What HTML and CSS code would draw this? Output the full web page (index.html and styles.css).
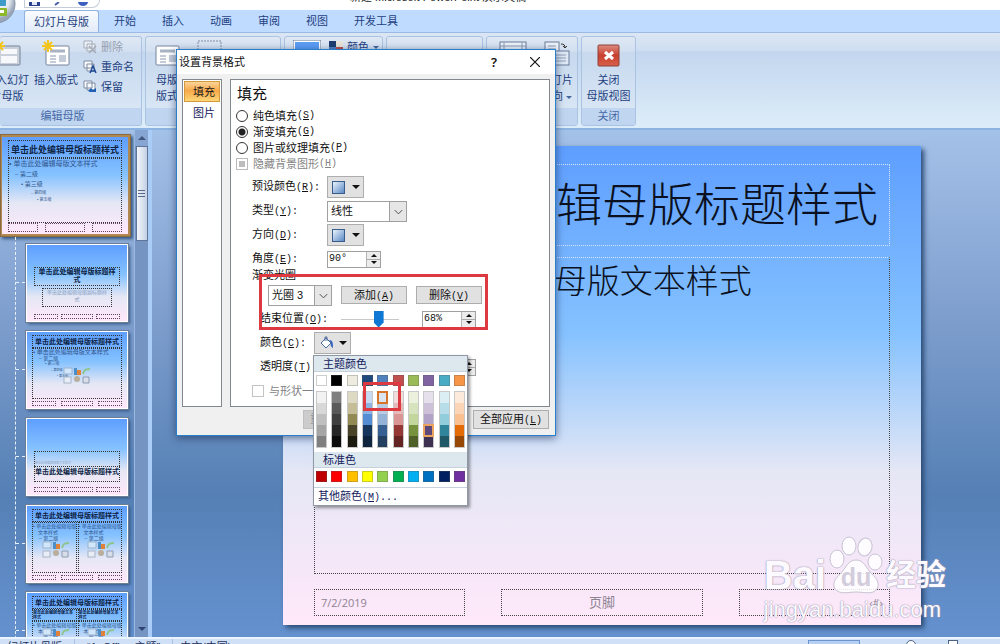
FILE: index.html
```
<!DOCTYPE html>
<html lang="zh-CN">
<head>
    <meta charset="UTF-8">
    <title>幻灯片母版</title>
    <link rel="stylesheet" href="styles.css">
</head>
<body>
    <header class="titlebar">
        <div class="quick">
            <svg width="66" height="10" viewBox="0 0 66 10">
                <path d="M1 0v4h11V0" fill="#2b3f8f"/>
                <path d="M4 0h5v3H4z" fill="#dfe6f8"/>
                <path d="M31 0l-4 3" stroke="#4a5fae" stroke-width="2"/>
                <path d="M50 0a5 4 0 0 0 10 0z" fill="#3f5fc0"/>
            </svg>
        </div>
        <span class="doc-name">新建 Microsoft PowerPoint 演示文稿</span>
    </header>
    <div class="orb">
        <svg width="42" height="42" viewBox="0 0 42 42">
            <defs>
                <radialGradient id="orbFill" cx="50%" cy="40%">
                    <stop offset="0" stop-color="#fff"/>
                    <stop offset=".7" stop-color="#e3e8ef"/>
                    <stop offset="1" stop-color="#9aa6b8"/>
                </radialGradient>
            </defs>
            <circle cx="21" cy="21" r="19" fill="url(#orbFill)" stroke="#8794a8"/>
            <rect x="23" y="16" width="8" height="7" rx="1" fill="#3f9bc8"/>
            <rect x="23" y="25" width="9" height="8" rx="1" fill="#8db828"/>
            <path d="M25 27h4v3h-4z" fill="#fff"/>
            <rect x="13" y="25" width="8" height="8" rx="1" fill="#e8b321"/>
        </svg>
    </div>
    <nav class="tabs">
        <a class="tab active" href="#">幻灯片母版</a>
        <a class="tab" href="#">开始</a>
        <a class="tab" href="#">插入</a>
        <a class="tab" href="#">动画</a>
        <a class="tab" href="#">审阅</a>
        <a class="tab" href="#">视图</a>
        <a class="tab" href="#">开发工具</a>
    </nav>

    <section class="ribbon">
        <div class="group g-edit">
            <div class="tools">
                <button class="big" type="button">
                    <svg width="28" height="28" viewBox="0 0 28 28">
                        <rect x="5" y="6" width="22" height="19" rx="1" fill="#c9d0da" stroke="#77839a"/>
                        <rect x="8" y="9" width="16" height="5" fill="#f6f8fb"/><rect x="8" y="16" width="16" height="7" fill="#f6f8fb"/>
                        <path d="M6 0v13M0 6h12M2 2l8 8M10 2l-8 8" stroke="#f3c51c" stroke-width="2"/>
                    </svg>
                    <span>插入幻灯<br>片母版</span>
                </button>
                <button class="big" type="button">
                    <svg width="28" height="28" viewBox="0 0 28 28">
                        <rect x="4" y="6" width="23" height="19" rx="1" fill="#fff" stroke="#77839a"/>
                        <path d="M8 11h15" stroke="#a9b3c4" stroke-width="3"/>
                        <path d="M8 16h6M8 19h6M8 22h6" stroke="#8c98ae"/>
                        <rect x="17" y="15" width="7" height="7" fill="#c3cbd8"/>
                        <path d="M6 0v12M0 6h12M2 2l8 8M10 2l-8 8" stroke="#f3c51c" stroke-width="2"/>
                    </svg>
                    <span>插入版式</span>
                </button>
                <div class="stack">
                    <button class="small" type="button" disabled>
                        <svg width="14" height="14" viewBox="0 0 14 14"><path d="M1 1h8v7H1zM4 4h8v7H4z" fill="#eef1f6" stroke="#a3abb8"/><path d="M6 6l7 7M13 6l-7 7" stroke="#a3abb8" stroke-width="1.5"/></svg>
                        删除
                    </button>
                    <button class="small" type="button">
                        <svg width="14" height="14" viewBox="0 0 14 14"><path d="M1 1h8v7H1zM4 4h7v7H4z" fill="#f8fafd" stroke="#7f8ca3"/><path d="M7 13l3-7 3 7M8 11h4" fill="none" stroke="#1f4a94" stroke-width="1.5"/></svg>
                        重命名
                    </button>
                    <button class="small" type="button">
                        <svg width="14" height="14" viewBox="0 0 14 14"><path d="M1 1h8v7H1zM4 3h8v7H4z" fill="#f8fafd" stroke="#7f8ca3"/><path d="M5 11l3-3 2 2 3-2v4H7z" fill="#1f5fb4"/></svg>
                        保留
                    </button>
                </div>
            </div>
            <div class="group-name">编辑母版</div>
        </div>
        <div class="group g-layout">
            <div class="tools">
                <button class="big" type="button">
                    <svg width="28" height="28" viewBox="0 0 28 28">
                        <rect x="3" y="6" width="23" height="19" rx="1" fill="#fff" stroke="#77839a"/>
                        <path d="M7 11h15" stroke="#a9b3c4" stroke-width="3"/>
                        <path d="M7 16h6M7 19h6M7 22h6" stroke="#8c98ae"/>
                        <rect x="16" y="15" width="7" height="7" fill="#c3cbd8"/>
                    </svg>
                    <span>母版<br>版式</span>
                </button>
                <button class="big" type="button">
                    <svg width="28" height="28" viewBox="0 0 28 28"><rect x="2" y="1" width="23" height="22" fill="none" stroke="#7f8ca3" stroke-dasharray="2 1"/></svg>
                    <span>插入<br>占位符</span>
                </button>
            </div>
            <div class="group-name">母版版式</div>
        </div>
        <div class="group g-theme">
            <div class="tools">
                <button class="big" type="button">
                    <svg width="28" height="28" viewBox="0 0 28 28"><rect x="0" y="0" width="28" height="24" fill="#fff" stroke="#5c6f8d"/><rect x="2" y="2" width="24" height="20" fill="#5b9df5"/></svg>
                    <span>主题</span>
                </button>
                <div class="stack">
                    <button class="small" type="button">
                        <svg width="14" height="12" viewBox="0 0 14 12"><path d="M0 0h7v6H0z" fill="#1f3d70"/><path d="M7 0h7v6H7z" fill="#e8e4d8"/><path d="M0 6h7v6H0z" fill="#4f81bd"/><path d="M7 6h7v6H7z" fill="#c0504d"/></svg>
                        颜色 <i class="tri"></i>
                    </button>
                </div>
            </div>
            <div class="group-name">编辑主题</div>
        </div>
        <div class="group g-back"><div class="tools"></div><div class="group-name">背景</div></div>
        <div class="group g-page">
            <div class="tools">
                <button class="big" type="button">
                    <svg width="28" height="28" viewBox="0 0 28 28"><rect x="1" y="2" width="26" height="22" fill="#eef3fa" stroke="#6b7d99"/><path d="M5 2v22M23 2v22M1 6h26" stroke="#8d9db6"/></svg>
                    <span>页面设置</span>
                </button>
                <button class="big" type="button">
                    <svg width="28" height="28" viewBox="0 0 28 28"><rect x="2" y="2" width="14" height="18" fill="#eef3fa" stroke="#6b7d99"/><rect x="11" y="11" width="15" height="14" fill="#dfe9f6" stroke="#6b7d99"/><path d="M5 6h8M5 9h8M13 15h10M13 18h10M13 21h10" stroke="#8d9db6"/><path d="M18 4c3 0 4 1 4 4l-2-2m2 2l2-2" fill="none" stroke="#333"/></svg>
                    <span>幻灯片<br>方向 <i class="tri"></i></span>
                </button>
            </div>
            <div class="group-name">页面设置</div>
        </div>
        <div class="group g-close">
            <div class="tools">
                <button class="big" type="button">
                    <svg width="28" height="28" viewBox="0 0 28 28">
                        <defs><linearGradient id="redFill" x1="0" y1="0" x2="0" y2="1"><stop offset="0" stop-color="#dd8b80"/><stop offset=".5" stop-color="#c8402f"/><stop offset="1" stop-color="#d8604a"/></linearGradient></defs>
                        <rect x="3" y="5" width="21" height="21" rx="1" fill="url(#redFill)" stroke="#8e4038"/>
                        <path d="M10 12l8 7M18 12l-8 7" stroke="#fff" stroke-width="3"/>
                    </svg>
                    <span>关闭<br>母版视图</span>
                </button>
            </div>
            <div class="group-name">关闭</div>
        </div>
    </section>

    <main class="workspace">
        <aside class="thumbs">
            <div class="thumb-list">
                <div class="thumb master">
                    <div class="t-title">单击此处编辑母版标题样式</div>
                    <div class="t-body">
                        <p>• 单击此处编辑母版文本样式</p>
                        <p class="l2">– 第二级</p>
                        <p class="l3">• 第三级</p>
                        <p class="l4">– 第四级</p>
                        <p class="l5">• 第五级</p>
                    </div>
                    <div class="t-foot"><i></i><i></i><i></i></div>
                </div>
                <ul class="tree">
                    <li>
                        <div class="thumb cover">
                            <div class="t-title">单击此处编辑母版标题样<br>式</div>
                            <div class="t-sub">单击此处编辑母版副标题样<br>式</div>
                            <div class="t-foot"><i></i><i></i><i></i></div>
                        </div>
                    </li>
                    <li>
                        <div class="thumb">
                            <div class="t-title">单击此处编辑母版标题样式</div>
                            <div class="t-body">
                                <p>• 单击此处编辑母版文本样式</p>
                                <p class="l2">– 第二级</p>
                                <p class="l3">• 第三级</p>
                                <p class="l4">– 第四级</p>
                                <p class="l5">• 第五级</p>
                                <svg class="media" width="28" height="17" viewBox="0 0 28 17"><use href="#media"/></svg>
                            </div>
                            <div class="t-foot"><i></i><i></i><i></i></div>
                        </div>
                    </li>
                    <li>
                        <div class="thumb section">
                            <div class="t-sub">单击此处编辑母版文本样式</div>
                            <div class="t-title">单击此处编辑母版标题样式</div>
                            <div class="t-foot"><i></i><i></i><i></i></div>
                        </div>
                    </li>
                    <li>
                        <div class="thumb">
                            <div class="t-title">单击此处编辑母版标题样式</div>
                            <div class="t-cols">
                                <div class="t-body"><p>• 单击此处编辑母版</p><p class="l1">文本样式</p><p class="l2">– 第二级</p><svg class="media" width="28" height="17" viewBox="0 0 28 17"><use href="#media"/></svg></div>
                                <div class="t-body"><p>• 单击此处编辑母版</p><p class="l1">文本样式</p><p class="l2">– 第二级</p><svg class="media" width="28" height="17" viewBox="0 0 28 17"><use href="#media"/></svg></div>
                            </div>
                            <div class="t-foot"><i></i><i></i><i></i></div>
                        </div>
                    </li>
                    <li>
                        <div class="thumb compare">
                            <div class="t-title">单击此处编辑母版标题样式</div>
                            <div class="t-cols heads"><b>单击此处编辑母版文本<br>样式</b><b>单击此处编辑母版文本<br>样式</b></div>
                            <div class="t-cols">
                                <div class="t-body"><p>• 单击此处编辑母版文</p><p class="l1">本样式</p><p class="l2">– 第二级</p><svg class="media" width="28" height="17" viewBox="0 0 28 17"><use href="#media"/></svg></div>
                                <div class="t-body"><p>• 单击此处编辑母版文</p><p class="l1">本样式</p><p class="l2">– 第二级</p><svg class="media" width="28" height="17" viewBox="0 0 28 17"><use href="#media"/></svg></div>
                            </div>
                            <div class="t-foot"><i></i><i></i><i></i></div>
                        </div>
                    </li>
                </ul>
            </div>
            <div class="scroll">
                <span class="arrow up"></span>
                <span class="knob"><i></i><i></i><i></i></span>
                <span class="arrow down"></span>
            </div>
        </aside>
        <section class="stage">
            <article class="slide">
                <h1 class="box s-title">单击此处编辑母版标题样式</h1>
                <div class="box s-body">• 单击此处编辑母版文本样式</div>
                <div class="s-foot">
                    <span class="box date">7/2/2019</span>
                    <span class="box foot">页脚</span>
                    <span class="box num">‹#›</span>
                </div>
            </article>
        </section>
    </main>

    <footer class="status">
        <span class="cell">幻灯片母版</span>
        <span class="cell theme">“1_Office 主题”</span>
        <span class="cell lang">中文(中国)</span>
        <span class="views"></span>
        <span class="cell zoom"><i class="dot"></i><i class="fit"></i></span>
    </footer>

    <div class="dialog" role="dialog" aria-labelledby="dlgTitle">
        <div class="dlg-head">
            <span id="dlgTitle">设置背景格式</span>
            <button class="help" type="button">?</button>
            <button class="close" type="button" aria-label="关闭"><svg width="10" height="10" viewBox="0 0 10 10"><path d="M0 0l10 10M10 0L0 10" stroke="#111" stroke-width="1.2"/></svg></button>
        </div>
        <div class="dlg-body">
            <div class="pages">
                <button class="page on" type="button">填充</button>
                <button class="page" type="button">图片</button>
            </div>
            <form class="panel">
                <h2>填充</h2>
                <label class="opt"><input type="radio" name="fill">纯色填充<span class="key">(<u>S</u>)</span></label>
                <label class="opt"><input type="radio" name="fill" checked>渐变填充<span class="key">(<u>G</u>)</span></label>
                <label class="opt"><input type="radio" name="fill">图片或纹理填充<span class="key">(<u>P</u>)</span></label>
                <label class="opt off"><input class="mixed" type="checkbox" disabled>隐藏背景图形<span class="key">(<u>H</u>)</span></label>
                <div class="row">
                    <label for="preset">预设颜色<span class="key">(<u>R</u>):</span></label>
                    <button class="pick" id="preset" type="button"><span class="grad"></span><i class="tri"></i></button>
                </div>
                <div class="row">
                    <label for="kind">类型<span class="key">(<u>Y</u>):</span></label>
                    <span class="combo"><select id="kind"><option>线性</option></select><svg width="17" height="19" viewBox="0 0 17 19"><path d="M5 8l4 4 4-4" fill="none" stroke="#444"/></svg></span>
                </div>
                <div class="row">
                    <label for="dir">方向<span class="key">(<u>D</u>):</span></label>
                    <button class="pick" id="dir" type="button"><span class="grad"></span><i class="tri"></i></button>
                </div>
                <div class="row">
                    <label for="angle">角度<span class="key">(<u>E</u>):</span></label>
                    <span class="spin"><input id="angle" type="text" value="90°"><span class="ud"><i class="u"></i><i class="d"></i></span></span>
                </div>
                <div class="stops-name">渐变光圈</div>
                <div class="row stops">
                    <span class="combo tool"><select aria-label="渐变光圈"><option>光圈 3</option></select><svg width="17" height="19" viewBox="0 0 17 19"><path d="M5 8l4 4 4-4" fill="none" stroke="#444"/></svg></span>
                    <button class="btn" type="button">添加<span class="key">(<u>A</u>)</span></button>
                    <button class="btn" type="button">删除<span class="key">(<u>V</u>)</span></button>
                </div>
                <div class="row sub">
                    <label for="pos">结束位置<span class="key">(<u>O</u>):</span></label>
                    <input class="slider" type="range" value="68" aria-label="结束位置">
                    <span class="spin"><input id="pos" type="text" value="68%"><span class="ud"><i class="u"></i><i class="d"></i></span></span>
                </div>
                <div class="row sub color">
                    <label for="color">颜色<span class="key">(<u>C</u>):</span></label>
                    <button class="pick" id="color" type="button">
                        <svg width="16" height="14" viewBox="0 0 16 14"><path d="M2 7l5-5 5 5-5 5z" fill="#fff" stroke="#4c6a9a"/><path d="M6 5V1h2v4" fill="none" stroke="#4c6a9a"/><path d="M10 4c4 0 4 3 4 8-2-1-3-3-2-5z" fill="#3565c0"/></svg>
                        <i class="tri"></i>
                    </button>
                </div>
                <div class="row sub">
                    <label for="alpha">透明度<span class="key">(<u>T</u>):</span></label>
                    <input class="slider" type="range" value="0" aria-label="透明度">
                    <span class="spin"><input id="alpha" type="text" value="0%"><span class="ud"><i class="u"></i><i class="d"></i></span></span>
                </div>
                <label class="row check off"><input type="checkbox" disabled>与形状一起旋转<span class="key">(<u>W</u>)</span></label>
            </form>
        </div>
        <div class="dlg-foot">
            <button class="btn" type="button" disabled>重置背景<span class="key">(<u>B</u>)</span></button>
            <button class="btn" type="button">关闭</button>
            <button class="btn" type="button">全部应用<span class="key">(<u>L</u>)</span></button>
        </div>
        <div class="mark mark-stops"></div>

        <div class="palette">
            <div class="pal-name">主题颜色</div>
            <div class="base" id="base"></div>
            <div class="tints" id="tints"></div>
            <div class="pal-name">标准色</div>
            <div class="base" id="standard"></div>
            <button class="more" type="button">其他颜色<span class="key">(<u>M</u>)...</span></button>
            <div class="mark mark-color"></div>
        </div>
    </div>

    <div class="watermark">
        <div class="wm-top">
            <span>Bai</span>
            <span class="paw">
                <svg width="54" height="58" viewBox="0 0 54 58">
                    <ellipse cx="8" cy="23" rx="7" ry="9"/>
                    <ellipse cx="20" cy="10" rx="7" ry="9"/>
                    <ellipse cx="36" cy="11" rx="7" ry="9" transform="rotate(12 36 11)"/>
                    <ellipse cx="46" cy="26" rx="7" ry="8"/>
                    <path d="M27 24c8 0 10 8 15 13 6 6 9 10 6 16-4 6-13 3-21 3s-16 3-21-3c-3-6 0-10 6-16 5-5 7-13 15-13z"/>
                </svg>
                <span class="du">du</span>
            </span>
            <span class="cn">经验</span>
        </div>
        <div class="wm-url">jingyan.baidu.com</div>
    </div>

    <svg class="defs" width="0" height="0">
        <symbol id="media" viewBox="0 0 28 17">
            <rect x="1" y="1" width="8" height="6" fill="#cfe6fb" stroke="#9db4cc"/>
            <path d="M11 1h3v7h-3z" fill="#4d8ec8"/><path d="M14 3h4v5h-4z" fill="#e0813a"/>
            <path d="M20 7c1-5 4-5 7-5" stroke="#8fc48c" stroke-width="2" fill="none"/>
            <rect x="1" y="10" width="7" height="6" fill="#e9eef6" stroke="#a8b4c6"/>
            <circle cx="14" cy="12" r="3" fill="#b9ae9c"/><path d="M20 10h6v6h-6z" fill="#d8dde8" stroke="#8d9bb3"/>
        </symbol>
    </svg>

    <script>
        // 每一列：主色 + 五个深浅
        var theme = [
            ["#ffffff", "#f2f2f2", "#d8d8d8", "#bfbfbf", "#a5a5a5", "#7f7f7f"],
            ["#000000", "#7f7f7f", "#595959", "#3f3f3f", "#262626", "#0c0c0c"],
            ["#eeece1", "#ddd9c3", "#c4bd97", "#938953", "#494429", "#1d1b10"],
            ["#1f497d", "#c6d9f0", "#8db3e2", "#548dd4", "#17365d", "#0f243e"],
            ["#4f81bd", "#dbe5f1", "#b8cce4", "#95b3d7", "#366092", "#244061"],
            ["#c0504d", "#f2dcdb", "#e5b9b7", "#d99694", "#953734", "#632423"],
            ["#9bbb59", "#ebf1dd", "#d7e3bc", "#c3d69b", "#76923c", "#4f6128"],
            ["#8064a2", "#e5e0ec", "#ccc1d9", "#b2a2c7", "#5f497a", "#3f3151"],
            ["#4bacc6", "#dbeef3", "#b7dde8", "#92cddc", "#31859b", "#205867"],
            ["#f79646", "#fdeada", "#fbd5b5", "#fac08f", "#e36c09", "#974806"]
        ];
        var standard = ["#c00000", "#ff0000", "#ffc000", "#ffff00", "#92d050",
            "#00b050", "#00b0f0", "#0070c0", "#002060", "#7030a0"];

        function swatch(box, color) {
            var b = document.createElement("button");
            b.type = "button";
            b.className = "sw";
            b.title = color;
            b.style.background = color;
            box.appendChild(b);
            return b;
        }
        theme.forEach(function (col, i) {
            swatch(document.getElementById("base"), col[0]);
            var div = document.createElement("div");
            div.className = "tint";
            for (var k = 1; k < col.length; k++) {
                var b = swatch(div, col[k]);
                // 悬停的颜色和当前颜色
                if (i == 4 && k == 1) b.className += " hover";
                if (i == 7 && k == 4) b.className += " current";
            }
            document.getElementById("tints").appendChild(div);
        });
        standard.forEach(function (c) {
            swatch(document.getElementById("standard"), c);
        });
    </script>
</body>
</html>
```
FILE: styles.css
```
* {
    box-sizing: border-box;
}
body {
    margin: 0;
    height: 100vh;
    overflow: hidden;
    display: flex;
    flex-direction: column;
    position: relative;
    background: #fff;
    font: 11px/16px "Liberation Sans", "Noto Sans CJK SC", sans-serif;
    color: #1e3f7f;
}
button, input, select {
    font: inherit;
    color: inherit;
    margin: 0;
    padding: 0;
}
button {
    border: 0;
    background: none;
    white-space: nowrap;
}
p, h1, h2, ul {
    margin: 0;
    padding: 0;
    font-weight: normal;
    list-style: none;
}
.tri {
    display: inline-block;
    border: 4px solid transparent;
    border-top-color: #111;
    border-bottom: 0;
}

/* 标题栏 */
.titlebar {
    flex: none;
    height: 10px;
    display: flex;
    overflow: hidden;
    color: #222;
}
.quick {
    width: 76px;
    height: 8px;
    margin-left: 24px;
    padding-left: 3px;
    border: 1px solid #c5ccd8;
    border-top: 0;
    border-radius: 0 0 10px 0;
}
.doc-name {
    margin: -11px 0 0 250px;
}
.orb {
    position: absolute;
    left: -25px;
    top: -17px;
    z-index: 2;
}
.tabs {
    flex: none;
    height: 23px;
    display: flex;
    align-items: flex-end;
    padding-left: 24px;
    gap: 4px;
    background: #bfdbff;
    border-bottom: 1px solid #9dbbe2;
}
.tab {
    height: 22px;
    padding: 0 11px;
    line-height: 22px;
    color: #1e3f7f;
    text-decoration: none;
}
.tab.active {
    padding: 0 9px;
    background: linear-gradient(#fafcfe, #e1ebf8);
    border: 1px solid #8fb2e0;
    border-bottom: 0;
    border-radius: 3px 3px 0 0;
}

/* 功能区 */
.ribbon {
    flex: none;
    height: 97px;
    display: flex;
    gap: 3px;
    padding: 3px 0 2px;
    background: linear-gradient(#dbe6f4, #cfdff1 18%, #c3d6ee 20%, #dcecf8 96%);
    border-bottom: 2px solid #8db4e3;
}
.group {
    flex: none;
    display: flex;
    flex-direction: column;
    overflow: hidden;
    border: 1px solid #aac3e2;
    border-radius: 3px;
    background: linear-gradient(#dfe8f4, #d3e0f1 16%, #c8d9ee 18%, #dce9f7);
}
.g-edit { width: 142px; border-left: 0; }
.g-edit .tools { justify-content: flex-end; padding-right: 7px; }
.g-edit .group-name { padding-right: 16px; }
.g-layout { width: 136px; }
.g-theme { width: 99px; }
.g-back { width: 97px; }
.g-page { width: 92px; }
.g-close { width: 55px; }
.tools {
    flex: 1;
    display: flex;
    justify-content: center;
    align-items: flex-start;
    gap: 5px;
    padding-top: 3px;
}
.g-layout .tools {
    justify-content: flex-start;
    gap: 12px;
    padding-left: 7px;
}
.g-theme .tools {
    justify-content: flex-start;
    padding-left: 8px;
    gap: 8px;
}
.g-page .tools {
    justify-content: flex-end;
    padding-right: 4px;
}
.group-name {
    height: 17px;
    text-align: center;
    line-height: 17px;
    color: #4769a8;
    background: #c0d6f0;
}
.big {
    display: flex;
    flex-direction: column;
    align-items: center;
    gap: 4px;
}
.big svg {
    display: block;
}
.big .tri, .small .tri {
    border-width: 3px;
    border-bottom: 0;
    border-top-color: #47649a;
    vertical-align: middle;
}
.stack {
    display: flex;
    flex-direction: column;
    margin-top: -3px;
}
.small {
    height: 20px;
    display: flex;
    align-items: center;
    gap: 4px;
}
.small:disabled {
    color: #95a0b1;
}

/* 工作区 */
.workspace {
    flex: 1;
    min-height: 0;
    display: flex;
    background: linear-gradient(#a4c1e8, #7f9fce 36%, #5580b5 72%, #6591cf);
}
.thumbs {
    flex: none;
    display: flex;
    border-right: 4px solid #a9cdf6;
}
.thumb-list {
    width: 134px;
    overflow: hidden;
    padding-top: 4px;
}
.thumb {
    width: 102px;
    height: 78px;
    display: flex;
    flex-direction: column;
    padding: 3px 5px 2px;
    border: 1px solid #fff;
    outline: 1px solid #6d7e96;
    box-shadow: 2px 2px 3px #33557f;
    background: linear-gradient(#5e9eff, #85c2ff 39%, #e5e7f5 68%, #ffe8fa);
    color: #0c2344;
    font-size: 7px;
    line-height: 8px;
    white-space: nowrap;
    overflow: hidden;
}
.t-title {
    height: 13px;
    line-height: 11px;
    border: 1px dotted #333;
    text-align: center;
    font-weight: bold;
}
.t-body {
    position: relative;
    flex: 1;
    overflow: hidden;
    border: 1px dotted #333;
    font-size: 6px;
    line-height: 6px;
    color: #32588c;
}
.t-body .l1 { padding-left: 5px; }
.t-body .l2 { padding-left: 6px; font-size: 5px; }
.t-body .l3 { padding-left: 12px; font-size: 4px; }
.t-body .l4 { padding-left: 18px; font-size: 3px; }
.t-body .l5 { padding-left: 24px; font-size: 3px; }
.media {
    position: absolute;
    right: 30px;
    bottom: 14px;
}
.t-cols .media {
    right: 6px;
}
.t-cols {
    flex: 1;
    display: grid;
    grid-template-columns: 1fr 1fr;
    gap: 1px;
}
.t-cols .t-body {
    font-size: 5px;
}
.t-cols.heads {
    flex: none;
    font-size: 4px;
    line-height: 5px;
}
.heads b {
    border: 1px dotted #333;
    overflow: hidden;
}
.t-foot {
    display: flex;
    justify-content: space-between;
    margin-top: 2px;
}
.t-foot i {
    width: 24px;
    height: 5px;
    border: 1px dotted #65425e;
}
.t-foot i:nth-child(2) {
    width: 32px;
}
.thumb.master {
    width: 131px;
    height: 103px;
    padding: 3px 6px 2px;
    border: 3px solid #b08850;
    border-left-width: 2px;
    outline: 1px solid #8a6a42;
    outline-offset: -1px;
}
.master .t-title {
    height: 18px;
    line-height: 18px;
    font-size: 9px;
}
.master .t-body p {
    line-height: 10px;
    font-size: 6px;
}
.master .t-body p:first-child { font-size: 7px; }
.master .t-body .l4, .master .t-body .l5 {
    font-size: 4px;
    line-height: 7px;
}
.master .t-body .l5 { padding-left: 28px; }
.master .t-body .l4 { padding-left: 22px; }
.master .t-foot {
    margin-top: 0;
}
.master .t-foot i {
    width: 30px;
    height: 9px;
}
.master .t-foot i:nth-child(2) {
    width: 40px;
}
.cover {
    padding: 22px 7px 2px;
}
.cover .t-title {
    height: 19px;
    line-height: 8px;
}
.cover .t-sub {
    height: 20px;
    margin: 2px 8px 5px;
    border: 1px dotted #333;
    font-size: 5px;
    line-height: 7px;
    text-align: center;
    color: #8fa2bd;
}
.section {
    padding: 32px 7px 2px;
}
.section .t-sub {
    height: 15px;
    padding-top: 8px;
    border: 1px dotted #333;
    border-bottom: 0;
    font-size: 3px;
    line-height: 7px;
    color: #8fa2bd;
}
.section .t-title {
    height: 16px;
    margin-bottom: 3px;
    line-height: 9px;
}
.tree {
    margin-left: 15px;
    padding-top: 7px;
    border-left: 1px dashed #e8f0fb;
}
.tree li {
    height: 87px;
    display: flex;
    align-items: flex-start;
}
.tree li::before {
    content: "";
    width: 9px;
    margin: 38px 1px 0 0;
    border-top: 1px dashed #e8f0fb;
}
.scroll {
    width: 14px;
    display: flex;
    flex-direction: column;
    align-items: center;
    background: #7694c2;
    border-left: 1px solid #9ab9e2;
}
.arrow {
    height: 16px;
    width: 100%;
    display: flex;
    align-items: center;
    justify-content: center;
    background: #86a5d2;
}
.arrow::after {
    content: "";
    border: 4px solid transparent;
}
.up::after {
    border-bottom-color: #41577e;
    border-top: 0;
}
.down {
    margin-top: auto;
    background: none;
}
.down::after {
    border-top-color: #2d4570;
    border-bottom: 0;
}
.knob {
    width: 12px;
    height: 95px;
    display: flex;
    flex-direction: column;
    justify-content: center;
    align-items: center;
    gap: 2px;
    border: 1px solid #5e7599;
    background: linear-gradient(90deg, #f4f7fb, #c3d0e4);
}
.knob i {
    width: 7px;
    height: 1px;
    background: #54698c;
}
.stage {
    flex: 1;
    display: flex;
    padding: 16px 79px 12px 131px;
}
.slide {
    flex: 1;
    display: flex;
    flex-direction: column;
    padding: 18px 31px 9px;
    background: linear-gradient(#5e9eff, #85c2ff 39%, #e5e7f5 68%, #ffe8fa);
    box-shadow: 3px 3px 5px #2b4a73;
    color: #0a1020;
}
.box {
    border: 1px dotted #444;
}
.s-title {
    height: 82px;
    line-height: 80px;
    font-size: 46px;
    font-weight: 300;
    text-align: center;
    white-space: nowrap;
    border-color: #d5e4ff;
}
.s-body {
    flex: 1;
    margin: 11px 0 15px;
    padding-left: 20px;
    font-size: 33px;
    font-weight: 300;
    line-height: 48px;
    white-space: nowrap;
    border-top-color: #d5e4ff;
}
.s-foot {
    display: grid;
    grid-template-columns: 151fr 203fr 151fr;
    gap: 36px;
    color: #8d8492;
}
.s-foot .box {
    height: 27px;
    padding: 0 6px;
    line-height: 25px;
    font-family: "Open Sans", "Noto Sans CJK SC", sans-serif;
}
.foot {
    text-align: center;
    font-size: 13px;
}
.num {
    text-align: right;
}

/* 状态栏 */
.status {
    flex: none;
    height: 7px;
    display: flex;
    overflow: hidden;
    background: #cfe0f7;
    border-top: 2px solid #eaf4ff;
    color: #1c2f5c;
}
.cell {
    padding-left: 7px;
}
.theme {
    margin-left: 12px;
    padding-left: 12px;
    border-left: 1px solid #a9c1e2;
}
.lang {
    margin-left: 12px;
    border-left: 1px solid #a9c1e2;
}
.views {
    width: 52px;
    height: 9px;
    margin: 1px 0 0 auto;
    border: 1px solid #6d94cc;
    background: #b6d0f3;
}
.zoom {
    width: 140px;
    display: flex;
    gap: 32px;
    padding-left: 46px;
}
.dot, .fit {
    width: 10px;
    height: 10px;
    margin-top: 1px;
    border: 1px solid #4e6384;
    border-radius: 5px;
    background: #fff;
}
.fit {
    border-radius: 0;
}

/* 设置背景格式 */
.dialog {
    position: absolute;
    left: 176px;
    top: 49px;
    width: 380px;
    border: 1px solid #2a7fca;
    background: #f0f0f0;
    box-shadow: 0 2px 8px rgba(20, 40, 80, .6);
    color: #111;
}
.key {
    font-family: "Liberation Mono", monospace;
    font-size: 10px;
}
.dlg-head {
    height: 24px;
    display: flex;
    align-items: center;
    padding: 0 15px 0 2px;
    background: #fff;
}
.help {
    margin-left: auto;
    font-family: "Noto Sans", sans-serif;
    font-size: 13px;
    font-weight: 600;
}
.close {
    margin-left: 33px;
    height: 10px;
}
.close svg {
    display: block;
}
.dlg-body {
    display: flex;
    gap: 8px;
    padding: 5px 5px 3px;
}
.pages {
    width: 40px;
    padding: 1px;
    border: 1px solid #828790;
    background: #fff;
}
.page {
    width: 100%;
    height: 21px;
    padding-left: 4px;
    color: #14205c;
    border: 1px solid transparent;
}
.page.on {
    border-color: #d49a3e;
    background: linear-gradient(#fbd49a, #f7a94a 45%, #fdd576);
    color: #1b1b1b;
}
.panel {
    flex: 1;
    padding-bottom: 3px;
    border: 1px solid #828790;
    background: #fff;
}
h2 {
    height: 28px;
    padding-left: 6px;
    font-size: 15px;
    line-height: 28px;
}
.opt {
    height: 16px;
    display: flex;
    align-items: center;
    padding-left: 5px;
}
.opt input, .check input {
    appearance: none;
    width: 12px;
    height: 12px;
    margin-right: 5px;
    border: 1px solid #333;
    background: #fff;
}
.opt input[type=radio] {
    border-radius: 50%;
}
.opt input:checked {
    background: radial-gradient(#222 0 3px, #fff 4px);
}
.opt .mixed {
    border-color: #bbb;
    background: #bdbdbd;
    box-shadow: inset 0 0 0 2px #fff;
}
.off {
    color: #838383;
}
.check input {
    border-color: #c4c4c4;
}
.opt.off {
    margin-bottom: 3px;
}
.row {
    height: 24px;
    display: flex;
    align-items: center;
    padding-left: 21px;
    white-space: nowrap;
}
.row > label {
    width: 75px;
}
.pick {
    width: 37px;
    height: 22px;
    display: flex;
    align-items: center;
    justify-content: center;
    gap: 7px;
    border: 1px solid #adadad;
    background: #e1e1e1;
}
.grad {
    width: 13px;
    height: 13px;
    border: 1px solid #385d8a;
    background: linear-gradient(135deg, #eaf2fc, #5b8ac6);
}
.combo {
    width: 80px;
    height: 21px;
    display: flex;
    border: 1px solid #a0a0a0;
    background: #fff;
}
.combo select {
    appearance: none;
    flex: 1;
    min-width: 0;
    border: 0;
    padding-left: 3px;
    background: none;
}
.combo svg {
    background: #e6e6e6;
    border-left: 1px solid #a0a0a0;
}
.combo.tool {
    width: 64px;
}
.spin {
    width: 54px;
    height: 17px;
    display: flex;
    border: 1px solid #a0a0a0;
    background: #fff;
}
.spin input {
    flex: 1;
    min-width: 0;
    border: 0;
    padding-left: 1px;
    background: none;
    font-family: "Liberation Mono", monospace;
    font-size: 10px;
}
.ud {
    width: 14px;
    display: flex;
    flex-direction: column;
    justify-content: space-around;
    align-items: center;
    border-left: 1px solid #b5b5b5;
    background: linear-gradient(#ececec 7px, #aaa 7px 8px, #ececec 8px);
}
.u, .d {
    border: 3px solid transparent;
}
.u {
    border-bottom-color: #111;
    border-top: 0;
}
.d {
    border-top-color: #111;
    border-bottom: 0;
}
.stops-name {
    height: 12px;
    line-height: 8px;
    padding-left: 21px;
}
.stops {
    gap: 9px;
    padding-left: 37px;
}
.btn {
    width: 66px;
    height: 18px;
    border: 1px solid #adadad;
    background: #e1e1e1;
    line-height: 16px;
}
.sub {
    padding-left: 29px;
}
.sub > label {
    width: 81px;
}
.sub.color > label {
    width: 54px;
}
.sub .pick {
    gap: 4px;
}
.slider {
    appearance: none;
    width: 58px;
    height: 18px;
    margin-right: 23px;
    background: linear-gradient(#c8c8c8, #c8c8c8) center / 100% 1px no-repeat;
}
.slider::-webkit-slider-thumb {
    appearance: none;
    width: 10px;
    height: 17px;
    background: #0f78d4;
    clip-path: polygon(0 0, 100% 0, 100% 70%, 50% 100%, 0 70%);
}
.dlg-foot {
    display: flex;
    justify-content: flex-end;
    gap: 9px;
    padding: 0 6px 6px 0;
}
.dlg-foot .btn {
    width: 76px;
    height: 19px;
}
.dlg-foot .btn:disabled {
    background: #ccc;
    border-color: #bfbfbf;
    color: #999;
}
.mark {
    position: absolute;
    border: 3px solid #dc3a40;
    z-index: 1;
}
.mark-stops {
    left: 82px;
    top: 224px;
    width: 229px;
    height: 56px;
}

/* 颜色面板 */
.palette {
    position: absolute;
    left: 136px;
    top: 305px;
    width: 155px;
    border: 1px solid #8f98a4;
    background: #fff;
    box-shadow: 2px 2px 3px rgba(0, 0, 0, .4);
    color: #14205c;
}
.pal-name {
    height: 16px;
    padding-left: 9px;
    line-height: 16px;
    background: #dde7ee;
    border-bottom: 1px solid #c8d2dc;
}
.base, .tints {
    display: flex;
    justify-content: space-between;
    padding: 3px 2px 5px;
}
.tints {
    padding: 0 2px 4px;
}
.sw {
    width: 11px;
    height: 11px;
    border: 1px solid rgba(90, 90, 90, .3);
}
.tint {
    display: flex;
    flex-direction: column;
    width: 11px;
    border: 1px solid #c9c9c9;
}
.tint .sw {
    width: 100%;
    border: 0;
}
.tint .hover, .tint .current {
    position: relative;
    outline: 2px solid #d8732a;
    outline-offset: -1px;
}
.tint .current {
    outline-color: #eba55e;
}
.more {
    width: 100%;
    height: 18px;
    padding-left: 4px;
    text-align: left;
    color: inherit;
    border-top: 1px solid #c8d2dc;
}
.mark-color {
    left: 49px;
    top: 26px;
    width: 38px;
    height: 29px;
}

/* 水印 */
.watermark {
    position: absolute;
    right: 54px;
    bottom: 22px;
    color: #fcfaff;
    text-shadow: 0 0 1px #8f88a0, 0 0 2px #b3acc2;
}
.wm-top {
    display: flex;
    align-items: flex-end;
    gap: 3px;
    height: 58px;
    margin-bottom: 4px;
    font-size: 40px;
    font-weight: bold;
    line-height: 38px;
}
.paw {
    position: relative;
    height: 58px;
}
.paw svg {
    display: block;
    fill: rgba(255, 255, 255, .85);
    stroke: #c8c2d4;
}
.du {
    position: absolute;
    left: 11px;
    bottom: 3px;
    width: 32px;
    font-size: 25px;
    line-height: 28px;
    text-align: center;
    color: #d3ccdc;
    text-shadow: none;
}
.cn {
    font-size: 30px;
}
.wm-url {
    font-size: 22px;
    line-height: 24px;
}
.defs {
    position: absolute;
}
```
